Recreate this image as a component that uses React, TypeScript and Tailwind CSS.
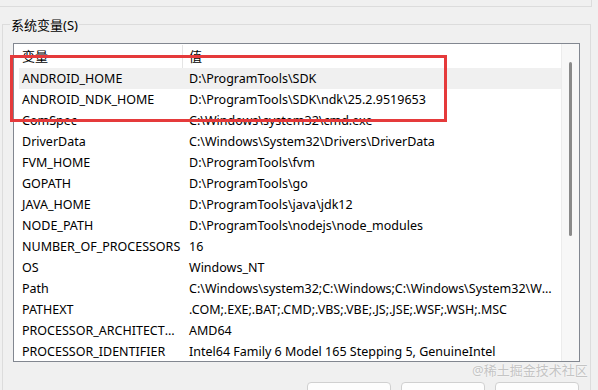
const rows: [string, string][] = [
	["ANDROID_HOME", "D:\\ProgramTools\\SDK"],
	["ANDROID_NDK_HOME", "D:\\ProgramTools\\SDK\\ndk\\25.2.9519653"],
	["ComSpec", "C:\\Windows\\system32\\cmd.exe"],
	["DriverData", "C:\\Windows\\System32\\Drivers\\DriverData"],
	["FVM_HOME", "D:\\ProgramTools\\fvm"],
	["GOPATH", "D:\\ProgramTools\\go"],
	["JAVA_HOME", "D:\\ProgramTools\\java\\jdk12"],
	["NODE_PATH", "D:\\ProgramTools\\nodejs\\node_modules"],
	["NUMBER_OF_PROCESSORS", "16"],
	["OS", "Windows_NT"],
	["Path", "C:\\Windows\\system32;C:\\Windows;C:\\Windows\\System32\\Wbem;C:\\Windows\\System32\\WindowsPowerShell"],
	["PATHEXT", ".COM;.EXE;.BAT;.CMD;.VBS;.VBE;.JS;.JSE;.WSF;.WSH;.MSC"],
	["PROCESSOR_ARCHITECTURE", "AMD64"],
	["PROCESSOR_IDENTIFIER", "Intel64 Family 6 Model 165 Stepping 5, GenuineIntel"],
];

export default function App() {
	return (
		<div className="relative h-[390px] w-[598px] overflow-hidden bg-[#f0f0f0] text-[12.5px] text-black font-['Noto_Sans','Noto_Sans_CJK_SC',sans-serif]">
			{/* bottom of the user variables group */}
			<div className="h-[7px] w-[592px] border-b border-r border-[#dcdcdc]" />

			{/* system variables group */}
			<div className="ml-[2px] mt-[17px] w-[589px] border border-[#dcdcdc] pb-[20px]">
				<div className="-mt-[8px] ml-[7px] w-fit bg-[#f0f0f0] px-[1px] text-[13px] leading-[16px]">
					系统变量(S)
				</div>

				<div className="ml-[10px] mt-[10px] flex h-[319px] w-[567px] overflow-hidden border border-[#828790] bg-white">
					<div className="w-[547px] overflow-hidden">
						<div className="flex h-[24px] items-center pt-[1px] text-[13px]">
							<div className="w-[168px] pl-[8px]">变量</div>
							<div className="h-full w-px bg-[#e5e5e5]" />
							<div className="flex-1 pl-[6px]">值</div>
						</div>
						{rows.map(([name, value], i) => (
							<div
								key={name}
								className={`ml-[5px] flex h-[21px] w-[542px] items-center pt-[2px] ${i === 0 ? "bg-[#f0f0f0]" : ""}`}
							>
								<div className="w-[164px] truncate pl-[3px]">{name}</div>
								<div className="flex-1 truncate pl-[6px] pr-[4px]">{value}</div>
							</div>
						))}
					</div>
					<div className="w-[18px] border-l border-[#ececec] bg-[#f7f7f7] pt-[18px]">
						<div className="ml-[7px] h-[174px] w-[3px] rounded-full bg-[#8a8a8a]" />
					</div>
				</div>

				<div className="ml-[10px] mt-[20px] flex w-[567px] justify-end gap-[10px] pr-[1px]">
					<button className="h-[28px] w-[84px] rounded-[4px] border border-[#d0d0d0] bg-[#fdfdfd] pt-[6px] text-[12.5px]">
						新建(W)...
					</button>
					<button className="h-[28px] w-[84px] rounded-[4px] border border-[#d0d0d0] bg-[#fdfdfd] pt-[6px] text-[12.5px]">
						编辑(I)...
					</button>
					<button className="h-[28px] w-[84px] rounded-[4px] border border-[#d0d0d0] bg-[#fdfdfd] pt-[6px] text-[12.5px]">
						删除(L)
					</button>
				</div>
			</div>

			{/* red highlight box drawn over the list */}
			<div className="absolute left-[10px] top-[55px] h-[67px] w-[437px] border-[3px] border-[#e53a3b]" />

			{/* watermark */}
			<div className="absolute left-[472px] top-[362px] text-[13px] leading-[16px] text-[#c4c4c4] [text-shadow:0_0_2px_#ffffff]">
				@稀土掘金技术社区
			</div>
		</div>
	);
}
